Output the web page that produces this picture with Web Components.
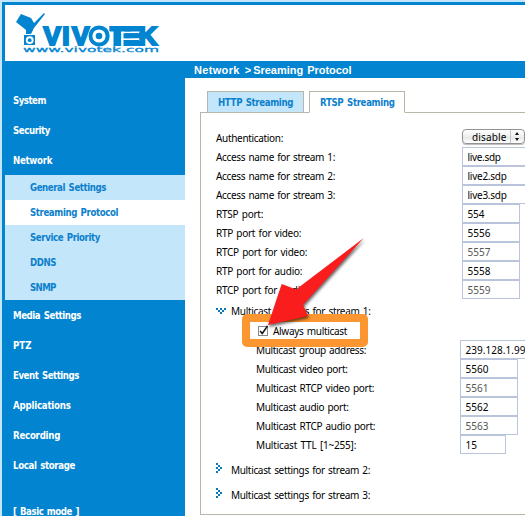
<!DOCTYPE html>
<html lang="en"><head><meta charset="utf-8"><title>Network &gt; Streaming Protocol</title>
<style>html,body{margin:0;width:525px;height:516px;overflow:hidden;background:#fff}</style></head><body>
<camera-app></camera-app>
<script>
const define=(name,html,setup)=>customElements.define(name,class extends HTMLElement{
  connectedCallback(){
    if(this.shadowRoot)return;
    const t=document.createElement('template');t.innerHTML=html;
    this.attachShadow({mode:'open'}).append(t.content.cloneNode(true));
    if(setup)setup(this,this.shadowRoot);
  }
});

// Text tracked so that it fills the width given in its w attribute.
define('fit-text',`<style>:host{display:inline-block;white-space:nowrap;line-height:14px;word-spacing:1px}span{display:inline-block}</style><span><slot></slot></span>`,(el,r)=>{
  const s=r.querySelector('span'),w=+el.getAttribute('w');
  const n=el.textContent.length;
  if(w)s.style.letterSpacing=((w-s.getBoundingClientRect().width+.4)/(n-1)).toFixed(3)+'px';
});

define('brand-logo',`<style>:host{display:block;height:56px;background:#fff}svg{display:block}</style>
<svg width="180" height="56" viewBox="5 5 180 56" fill="#0284d0">
<path d="M21 14 31 18 34 23 44 13 45 14 34 28 31 34 26 34 26 30 16 22Z"/>
<path fill-rule="evenodd" d="M24 35H35V45H24ZM29.7 36.2A3.9 3.9 0 1 0 29.7 44A3.9 3.9 0 1 0 29.7 36.2Z"/><circle cx="29.7" cy="40.2" r="1.9"/>
<text y="45.2" x="43.6 62.2 72 89 110 124 138.5" font-family="Liberation Sans" font-weight="700" font-size="26" stroke="#0284d0" stroke-width="2.2">VIVOTEK</text>
<circle cx="99" cy="36" r="10.4"/><circle cx="99" cy="36" r="6.6" fill="#fff"/><circle cx="99" cy="36" r="3.3"/>
<path fill="#fff" d="M121 31.5h18v1.7h-18zM121 38.3h18v1.7h-18z"/>
<path d="M110 26.5h29v5h-29zM123.5 33.2h15v5.1h-15zM123.5 40h15.5v6h-15.5zM113.5 30h7v16h-7z"/>
<text x="23" y="52.4" font-family="DejaVu Sans" font-size="7.4" stroke="#0284d0" stroke-width=".25" textLength="136" lengthAdjust="spacingAndGlyphs">www.vivotek.com</text>
</svg>`);

define('nav-item',`<style>:host{display:flex;box-sizing:border-box;align-items:center;height:30px;padding:1px 0 0 8px;color:#fff;font:700 9.6px "DejaVu Sans Condensed","DejaVu Sans",sans-serif;font-stretch:condensed}
:host([sub]){height:25px;padding-left:25px;background:#c3e6fb;color:#0c80cc}:host([active]){background:#fff}:host([mode]){margin-top:16px}</style><slot></slot>`);

define('side-nav',`<style>:host{display:block;background:#0284d0;padding-top:9px}</style>`,(el,r)=>{
  const items=[['System',33],['Security',37],['Network',39],['General Settings',76,'sub'],['Streaming Protocol',88,'sub active'],['Service Priority',70,'sub'],['DDNS',26,'sub'],['SNMP',26,'sub'],['Media Settings',68],['PTZ',18],['Event Settings',66],['Applications',57.5],['Recording',47],['Local storage',62],['[ Basic mode ]',66,'mode']];
  r.innerHTML+=items.map(([t,w,a=''])=>`<nav-item ${a}><fit-text w="${w}">${t}</fit-text></nav-item>`).join('');
});

define('tab-button',`<style>:host{display:flex;box-sizing:border-box;height:22px;border:1px solid #b9b5a8;background:#c3e6fb;color:#0c80cc;font:700 9.6px "DejaVu Sans Condensed","DejaVu Sans",sans-serif;font-stretch:condensed;align-items:center;padding:1px 0 0 10px}
:host([active]){background:#fff;border-bottom-color:#fff}</style><slot></slot>`);

define('text-field',`<style>:host{display:block;box-sizing:border-box;width:58px;height:19px;border:1px solid #bac4da;background:#fff;padding:2px 0 0 4.5px;overflow:hidden}
:host([wide]){width:150px}:host([short]){width:46px}:host([dim]){color:#555}</style><slot></slot>`);

define('select-box',`<style>:host{display:flex;box-sizing:border-box;width:63px;height:15px;margin-top:1px;border:1px solid #929292;border-radius:4px;background:linear-gradient(#fff,#eee 50%,#e4e4e4 51%,#fff);box-shadow:0 1px 1px #bbb;align-items:center;padding-left:9px}
svg{margin-left:auto}</style><slot></slot><svg width="14" height="13"><path d="M.5 0V13" stroke="#c4c4c4"/><path d="M5 5 7 2 9 5ZM5 8H9L7 11Z" fill="#111"/></svg>`);

define('form-row',`<style>:host{display:grid;grid-template-columns:246px 1fr;height:19px;align-items:start}:host([inner]){grid-template-columns:204px 1fr;padding-left:40px}.l{padding-top:3px}</style><div class="l"><slot name="label"></slot></div><slot></slot>`);

define('chevron-icon',`<style>:host{display:block;height:10px;color:#0878b8}svg{display:block}.d{display:none;margin-top:4px}:host([down]) .d{display:block}:host([down]) .r{display:none}</style>
<svg class="r" width="10" height="10" fill="currentColor" shape-rendering="crispEdges"><path d="M0 0h2v2H0zM0 4h2v2H0zM0 8h2v2H0zM2 2h2v2H2zM2 6h2v2H2zM4 4h2v2H4z"/></svg>
<svg class="d" width="10" height="8" fill="currentColor" shape-rendering="crispEdges"><path d="M0 0h2v2H0zM4 0h2v2H4zM8 0h2v2H8zM2 2h2v2H2zM6 2h2v2H6zM4 4h2v2H4z"/></svg>`);

define('section-row',`<style>:host{display:flex;height:25px;align-items:center}chevron-icon{width:15px;margin-top:-4px}</style><chevron-icon></chevron-icon><slot></slot>`,(el,r)=>{if(el.hasAttribute('open'))r.querySelector('chevron-icon').setAttribute('down','')});

define('check-row',`<style>:host{display:flex;height:19px;align-items:center;padding-left:42px}svg{margin-right:5px;display:block}</style>
<svg width="10" height="12"><rect x=".5" y="1.5" width="9" height="9" fill="#fff" stroke="#888"/><path d="M2 6 4.3 8.5 9.5 1" fill="none" stroke="#111" stroke-width="1.5"/></svg><slot></slot>`);

define('settings-panel',`<style>:host{display:block;box-sizing:border-box;width:360px;height:403px;border:1px solid #b9b5a8;padding:15px 0 0 15px;margin:-1px 0 0 15px}section-row[open]{height:22px;padding-top:2px;box-sizing:border-box}.gap{height:3px}</style><div id="rows"></div>`,(el,r)=>{
  const row=([l,lw,v,vw,a=''],inner)=>`<form-row ${inner}><fit-text slot="label" w="${lw}">${l}</fit-text>${v==='disable'?`<select-box><fit-text w="34">disable</fit-text></select-box>`:`<text-field ${a}><fit-text w="${vw}">${v}</fit-text></text-field>`}</form-row>`;
  const top=[['Authentication:',67,'disable'],['Access name for stream 1:',119,'live.sdp',33,'wide'],['Access name for stream 2:',119,'live2.sdp',39,'wide'],['Access name for stream 3:',119,'live3.sdp',39,'wide'],['RTSP port:',47,'554',16.5],['RTP port for video:',85,'5556',22.5],['RTCP port for video:',91,'5557',22.5,'dim'],['RTP port for audio:',86,'5558',22.5],['RTCP port for audio:',92,'5559',22.5,'dim']];
  const sub=[['Multicast group address:',110,'239.128.1.99',59.5,'wide'],['Multicast video port:',91.5,'5560',22.5],['Multicast RTCP video port:',118,'5561',22.5,'dim'],['Multicast audio port:',92.5,'5562',22.5],['Multicast RTCP audio port:',119,'5563',22.5,'dim'],['Multicast TTL [1~255]:',100,'15',11,'short']];
  r.querySelector('#rows').innerHTML=top.map(x=>row(x,'')).join('')
  +`<section-row open><fit-text w="139.5">Multicast settings for stream 1:</fit-text></section-row><check-row><fit-text w="74">Always multicast</fit-text></check-row>`
  +sub.map(x=>row(x,'inner')).join('')+`<div class="gap"></div><section-row><fit-text w="139">Multicast settings for stream 2:</fit-text></section-row><section-row><fit-text w="139">Multicast settings for stream 3:</fit-text></section-row>`;
});

define('callout-mark',`<style>:host{position:absolute;inset:0;pointer-events:none}svg{display:block;overflow:visible}.a{filter:drop-shadow(1px 2px 1.5px rgba(0,0,0,.6))}</style>
<svg width="525" height="516"><rect x="246" y="318" width="118" height="25" rx="1" fill="none" stroke="#fc9630" stroke-width="8" stroke-linejoin="round"/>
<path class="a" fill="#fa1d1d" d="M268 325 281.7 284 296 289.5 363.8 238 303 305 308 316Z"/></svg>`);

define('camera-app',`<style>:host{display:block;position:relative;box-sizing:border-box;width:525px;height:516px;overflow:hidden;border:solid #c3e6fb;border-width:2px 0 0 2px;font:10px/14px "Noto Sans","Open Sans",sans-serif;color:#000}
.frame{border:solid #0284d0;border-width:3px 0 0 3px}
.title{height:17px;background:#0284d0;color:#fff;font:700 11px/17px "Liberation Sans",sans-serif;padding-left:189px;display:flex;align-items:center}
.title>*+*{margin-left:5px}.title>*:last-child{margin-left:2px}
.body{display:grid;grid-template-columns:180px 1fr;height:440px}
side-nav{margin-top:-2px;height:440px}
.tabs{display:flex;gap:5px;padding:13px 0 0 22px;position:relative}
tab-button{width:97px}tab-button[active]{width:96px}
callout-mark{left:-2px;top:-2px}</style>
<div class="frame"><brand-logo></brand-logo><div class="title"><fit-text w="45">Network</fit-text><fit-text>&gt;</fit-text><fit-text w="98">Sreaming Protocol</fit-text></div>
<div class="body"><side-nav></side-nav><main><div class="tabs"><tab-button><fit-text w="75">HTTP Streaming</fit-text></tab-button><tab-button active><fit-text w="74.5">RTSP Streaming</fit-text></tab-button></div><settings-panel></settings-panel></main></div></div><callout-mark></callout-mark>`);
</script></body></html>
